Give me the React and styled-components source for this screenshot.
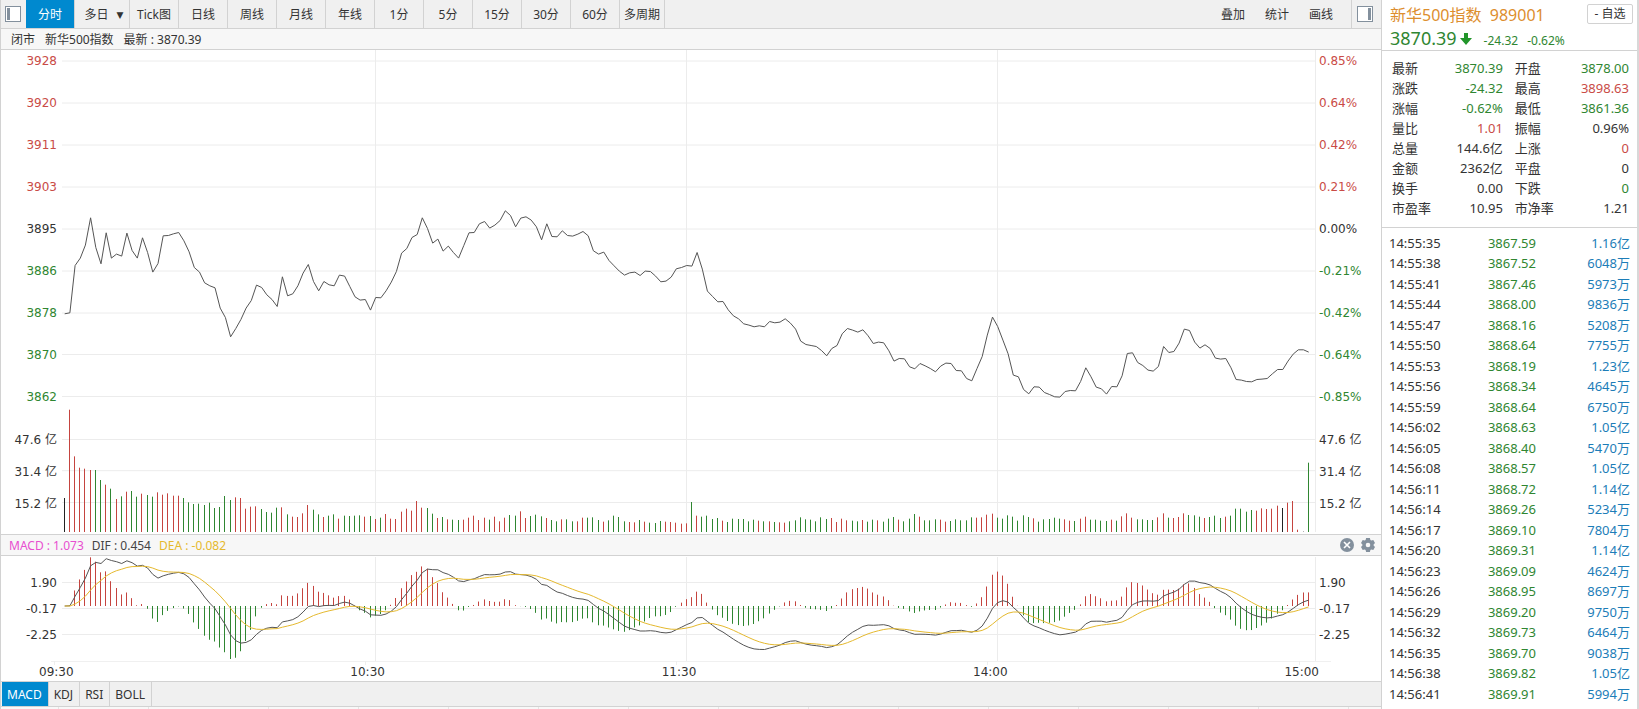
import React, { useState } from 'react';
import styled, { createGlobalStyle } from 'styled-components';

const colors = {
    up: '#c5443f',
    down: '#2f8631',
    text: '#333',
    line: '#d2d2d2',
    bar: '#f0f0f0',
    active: '#0089cf',
    volume: '#1c7db8',
    dea: '#e5b92e',
    icon: '#83909d'
};

const toneColor = { up: '#c94b46', down: colors.down, flat: colors.text };

const PREV_CLOSE = 3894.71;
const MINUTES = 240;

// one packed sample per minute, counted down from PRICE_TOP in 1/PRICE_SCALE points
const PRICE_TOP = 3904.36;
const PRICE_SCALE = 15.19;
const priceSamples = [
    401, 398, 256, 234, 195, 113, 202, 251, 158, 234, 222, 228, 159, 211, 234,
    173, 217, 276, 250, 167, 166, 161, 157, 182, 215, 262, 276, 308, 317, 323,
    384, 412, 470, 445, 418, 384, 361, 315, 322, 344, 358, 379, 290, 347, 341,
    317, 279, 253, 304, 332, 304, 314, 317, 285, 288, 319, 350, 360, 358, 390,
    352, 353, 332, 306, 274, 219, 205, 172, 163, 113, 145, 189, 177, 213, 198,
    217, 234, 196, 158, 157, 131, 124, 144, 135, 121, 92, 106, 140, 114, 110,
    120, 140, 179, 131, 169, 170, 152, 166, 168, 162, 154, 167, 212, 222, 216,
    241, 257, 273, 285, 278, 276, 286, 273, 274, 288, 305, 303, 291, 266, 262,
    256, 258, 217, 267, 333, 349, 365, 364, 389, 407, 416, 431, 435, 440, 437,
    440, 424, 428, 426, 416, 429, 447, 483, 493, 496, 499, 511, 527, 505, 496,
    461, 445, 450, 456, 449, 467, 490, 486, 488, 512, 543, 535, 536, 560, 566,
    550, 557, 565, 575, 558, 549, 550, 571, 572, 595, 602, 565, 529, 465, 411,
    439, 480, 521, 585, 590, 628, 641, 620, 621, 637, 643, 650, 651, 634, 631,
    632, 604, 563, 590, 621, 626, 642, 619, 620, 587, 520, 518, 547, 556, 570,
    573, 559, 499, 517, 514, 489, 447, 451, 486, 504, 494, 505, 534, 537, 535,
    563, 598, 600, 604, 605, 598, 597, 595, 581, 568, 568, 543, 522, 509, 509,
    516
];
const prices = priceSamples.map(v => PRICE_TOP - v / PRICE_SCALE);

const VOLUME_SCALE = 5.83;
const volumeSamples = [
    102, 367, 227, 193, 190, 186, 186, 156, 142, 130, 99, 107, 121, 123, 106,
    115, 111, 106, 119, 112, 116, 109, 109, 102, 89, 84, 85, 81, 88, 72,
    75, 108, 96, 104, 102, 70, 76, 77, 69, 60, 58, 73, 74, 53, 46,
    45, 56, 81, 67, 53, 45, 49, 53, 40, 49, 48, 49, 50, 46, 48,
    39, 43, 54, 40, 39, 61, 70, 64, 93, 73, 72, 55, 42, 45, 38,
    37, 36, 37, 43, 49, 36, 43, 37, 46, 32, 43, 51, 49, 62, 42,
    48, 52, 47, 42, 36, 32, 38, 38, 32, 32, 43, 43, 44, 36, 31,
    35, 49, 45, 32, 30, 29, 36, 31, 28, 27, 33, 31, 30, 28, 25,
    26, 90, 49, 46, 49, 39, 42, 34, 30, 40, 39, 39, 32, 37, 34,
    32, 32, 30, 29, 28, 32, 35, 44, 38, 37, 32, 44, 39, 42, 30,
    40, 35, 34, 32, 36, 31, 37, 35, 31, 40, 45, 37, 32, 40, 54,
    46, 35, 35, 38, 37, 31, 33, 38, 35, 35, 44, 43, 44, 52, 55,
    43, 40, 50, 46, 34, 50, 45, 41, 31, 38, 39, 43, 40, 38, 34,
    33, 40, 46, 37, 37, 34, 33, 37, 34, 47, 56, 43, 38, 38, 36,
    36, 44, 56, 43, 42, 45, 56, 51, 50, 46, 42, 45, 49, 42, 46,
    49, 70, 70, 61, 66, 64, 71, 69, 70, 79, 72, 88, 93, 7, 1,
    208
];
const volumes = volumeSamples.map(v => v / VOLUME_SCALE);

const ema = (values, period) => {
    const k = 2 / (period + 1);
    let last = values[0];
    return values.map(v => {
        last = v * k + last * (1 - k);
        return last;
    });
};

const fast = ema(prices, 12);
const slow = ema(prices, 26);
const dif = fast.map((v, i) => v - slow[i]);
const dea = ema(dif, 9);

const PLOT_WIDTH = 1254;
const MAIN_HEIGHT = 484;
const MACD_HEIGHT = 105;
const MACD_ZERO = 50;

const minuteX = i => 2.2 + (i * 1244) / MINUTES;
const barX = i => Math.floor(minuteX(i)) + 0.5;
const priceY = p => 179 + (PREV_CLOSE - p) * 5.063;
const volumeY = v => 482 - v * 1.943;
const macdY = v => MACD_ZERO - v * 12.6;

const linePoints = (values, toY) =>
    values.map((v, i) => `${(minuteX(i) + 0.5).toFixed(1)},${toY(v).toFixed(1)}`).join(' ');

const barColor = i => {
    if (i === 0 || prices[i] === prices[i - 1]) return '#222';
    return prices[i] > prices[i - 1] ? colors.up : colors.down;
};

const hours = [313.5, 624.5, 935.5, 1253.5];
const mainRows = [11, 53, 95, 137, 179, 221, 263, 304.5, 346.5, 389.5, 420.7, 452.5];
const macdRows = [26.5, 52.5, 78.5];

const priceAxis = [
    ['3928', '0.85%', 'up'],
    ['3920', '0.64%', 'up'],
    ['3911', '0.42%', 'up'],
    ['3903', '0.21%', 'up'],
    ['3895', '0.00%', 'flat'],
    ['3886', '-0.21%', 'down'],
    ['3878', '-0.42%', 'down'],
    ['3870', '-0.64%', 'down'],
    ['3862', '-0.85%', 'down']
];
const volumeAxis = ['47.6 亿', '31.4 亿', '15.2 亿'];
const macdAxis = ['1.90', '-0.17', '-2.25'];
const times = ['09:30', '10:30', '11:30', '14:00', '15:00'];

const periods = ['日线', '周线', '月线', '年线', '1分', '5分', '15分', '30分', '60分'];
const tools = ['叠加', '统计', '画线'];
const indicators = ['MACD', 'KDJ', 'RSI', 'BOLL'];

const quotes = [
    ['最新', '3870.39', 'down', '开盘', '3878.00', 'down'],
    ['涨跌', '-24.32', 'down', '最高', '3898.63', 'up'],
    ['涨幅', '-0.62%', 'down', '最低', '3861.36', 'down'],
    ['量比', '1.01', 'up', '振幅', '0.96%', 'flat'],
    ['总量', '144.6亿', 'flat', '上涨', '0', 'up'],
    ['金额', '2362亿', 'flat', '平盘', '0', 'flat'],
    ['换手', '0.00', 'flat', '下跌', '0', 'down'],
    ['市盈率', '10.95', 'flat', '市净率', '1.21', 'flat']
];

const ticks = [
    ['14:55:35', '3867.59', '1.16亿'],
    ['14:55:38', '3867.52', '6048万'],
    ['14:55:41', '3867.46', '5973万'],
    ['14:55:44', '3868.00', '9836万'],
    ['14:55:47', '3868.16', '5208万'],
    ['14:55:50', '3868.64', '7755万'],
    ['14:55:53', '3868.19', '1.23亿'],
    ['14:55:56', '3868.34', '4645万'],
    ['14:55:59', '3868.64', '6750万'],
    ['14:56:02', '3868.63', '1.05亿'],
    ['14:56:05', '3868.40', '5470万'],
    ['14:56:08', '3868.57', '1.05亿'],
    ['14:56:11', '3868.72', '1.14亿'],
    ['14:56:14', '3869.26', '5234万'],
    ['14:56:17', '3869.10', '7804万'],
    ['14:56:20', '3869.31', '1.14亿'],
    ['14:56:23', '3869.09', '4624万'],
    ['14:56:26', '3868.95', '8697万'],
    ['14:56:29', '3869.20', '9750万'],
    ['14:56:32', '3869.73', '6464万'],
    ['14:56:35', '3869.70', '9038万'],
    ['14:56:38', '3869.82', '1.05亿'],
    ['14:56:41', '3869.91', '5994万'],
    ['14:56:44', '3869.85', '6880万']
];

const PanelIcon = ({ side }) => (
    <svg width="16" height="16" viewBox="0 0 16 16">
        <rect x="0.5" y="0.5" width="15" height="15" fill="#fff" stroke={colors.icon} />
        <rect x={side === 'left' ? 2 : 11} y="2" width="3" height="12" fill={colors.icon} />
    </svg>
);

const CloseIcon = () => (
    <svg width="14" height="14" viewBox="0 0 14 14">
        <circle cx="7" cy="7" r="7" fill={colors.icon} />
        <path d="M4 4l6 6M10 4l-6 6" stroke="#fff" strokeWidth="1.6" />
    </svg>
);

const GearIcon = () => (
    <svg width="14" height="14" viewBox="0 0 14 14">
        <path
            fill={colors.icon}
            fillRule="evenodd"
            d="M5.1 0h3.8l.5 2 .9.5 2-.6L14 4.9l-1.4 1.5v1.2L14 9.1l-1.7 3-2-.6-.9.5-.5 2H5.1l-.5-2-.9-.5-2 .6L0 9.1l1.4-1.5V6.4L0 4.9l1.7-3 2 .6.9-.5zM7 4.7a2.3 2.3 0 1 0 0 4.6 2.3 2.3 0 0 0 0-4.6z"
        />
    </svg>
);

const DownArrow = () => (
    <svg width="12" height="12" viewBox="0 0 12 12">
        <path d="M4 0h4v5h4l-6 7-6-7h4z" fill="#22952a" />
    </svg>
);

const Grid = ({ rows, bottom, top }) => (
    <g stroke="#ececec">
        {rows.map(y => (
            <line key={y} x1="0" x2={PLOT_WIDTH} y1={y} y2={y} />
        ))}
        {hours.map(x => (
            <line key={x} x1={x} x2={x} y1={top} y2={bottom} />
        ))}
    </g>
);

const MainPlot = () => (
    <Plot viewBox={`0 0 ${PLOT_WIDTH} ${MAIN_HEIGHT}`} height={MAIN_HEIGHT} preserveAspectRatio="none">
        <Grid rows={mainRows} top={0} bottom={482} />
        {volumes.map((v, i) => (
            <line key={i} x1={barX(i)} x2={barX(i)} y1={volumeY(v)} y2={482} stroke={barColor(i)} />
        ))}
        <polyline points={linePoints(prices, priceY)} stroke="#555" />
    </Plot>
);

const MacdPlot = () => (
    <Plot viewBox={`0 0 ${PLOT_WIDTH} ${MACD_HEIGHT}`} height={MACD_HEIGHT} preserveAspectRatio="none">
        <Grid rows={macdRows} top={1} bottom={MACD_HEIGHT} />
        {dif.map((v, i) => {
            const value = 2 * (v - dea[i]);
            return (
                <line
                    key={i}
                    x1={barX(i)}
                    x2={barX(i)}
                    y1={MACD_ZERO}
                    y2={macdY(value)}
                    stroke={value > 0 ? colors.up : colors.down}
                />
            );
        })}
        <polyline points={linePoints(dif, macdY)} stroke="#555" />
        <polyline points={linePoints(dea, macdY)} stroke={colors.dea} />
    </Plot>
);

const TimeAxis = () => (
    <TimeAxisWrapper>
        <AxisRule viewBox="0 0 1280 5" preserveAspectRatio="none">
            <path d="M0 .5H1280M3.5 0v5M314.5 0v5M625.5 0v5M936.5 0v5M1248.5 0v5" />
        </AxisRule>
        <Times>
            {times.map(t => (
                <span key={t}>{t}</span>
            ))}
        </Times>
    </TimeAxisWrapper>
);

export default function App() {
    const [period, setPeriod] = useState('分时');
    const [indicator, setIndicator] = useState('MACD');

    return (
        <Page>
            <GlobalStyle />
            <ChartArea>
                <Toolbar>
                    <IconButton aria-label="左侧栏">
                        <PanelIcon side="left" />
                    </IconButton>
                    <PeriodButton $active={period === '分时'} onClick={() => setPeriod('分时')}>
                        分时
                    </PeriodButton>
                    <PeriodButton $width={55} $active={period === '多日'} onClick={() => setPeriod('多日')}>
                        多日<Caret>▼</Caret>
                    </PeriodButton>
                    <PeriodButton $active={period === 'Tick图'} onClick={() => setPeriod('Tick图')}>
                        Tick图
                    </PeriodButton>
                    {periods.map(p => (
                        <PeriodButton key={p} $active={period === p} onClick={() => setPeriod(p)}>
                            {p}
                        </PeriodButton>
                    ))}
                    <PeriodButton $width={45} $active={period === '多周期'} onClick={() => setPeriod('多周期')}>
                        多周期
                    </PeriodButton>
                    <Tools>
                        {tools.map(t => (
                            <ToolButton key={t}>{t}</ToolButton>
                        ))}
                    </Tools>
                    <IconButton $right aria-label="右侧栏">
                        <PanelIcon side="right" />
                    </IconButton>
                </Toolbar>

                <InfoBar>
                    <span>闭市</span>
                    <span>新华500指数</span>
                    <span>最新 : 3870.39</span>
                </InfoBar>

                <ChartRow>
                    <Axis $side="left">
                        <PriceLabels>
                            {priceAxis.map(([price, , tone]) => (
                                <AxisLabel key={price} $tone={tone}>{price}</AxisLabel>
                            ))}
                        </PriceLabels>
                        <VolumeLabels>
                            {volumeAxis.map(v => (
                                <AxisLabel key={v}>{v}</AxisLabel>
                            ))}
                        </VolumeLabels>
                    </Axis>
                    <MainPlot />
                    <Axis>
                        <PriceLabels>
                            {priceAxis.map(([, percent, tone]) => (
                                <AxisLabel key={percent} $tone={tone}>{percent}</AxisLabel>
                            ))}
                        </PriceLabels>
                        <VolumeLabels>
                            {volumeAxis.map(v => (
                                <AxisLabel key={v}>{v}</AxisLabel>
                            ))}
                        </VolumeLabels>
                    </Axis>
                </ChartRow>

                <MacdBar>
                    <Legend $color="#e84fd0">MACD : 1.073</Legend>
                    <Legend $color="#444">DIF : 0.454</Legend>
                    <Legend $color={colors.dea}>DEA : -0.082</Legend>
                    <MacdActions>
                        <PlainButton aria-label="关闭">
                            <CloseIcon />
                        </PlainButton>
                        <PlainButton aria-label="设置">
                            <GearIcon />
                        </PlainButton>
                    </MacdActions>
                </MacdBar>

                <ChartRow>
                    <Axis $side="left">
                        <MacdLabels>
                            {macdAxis.map(v => (
                                <AxisLabel key={v}>{v}</AxisLabel>
                            ))}
                        </MacdLabels>
                    </Axis>
                    <MacdPlot />
                    <Axis>
                        <MacdLabels>
                            {macdAxis.map(v => (
                                <AxisLabel key={v}>{v}</AxisLabel>
                            ))}
                        </MacdLabels>
                    </Axis>
                </ChartRow>
                <TimeAxis />

                <Tabs>
                    {indicators.map(name => (
                        <Tab key={name} $active={indicator === name} onClick={() => setIndicator(name)}>
                            {name}
                        </Tab>
                    ))}
                </Tabs>
                <Sheet>
                    <SheetCell $width={58} />
                    <SheetCell $width={90} />
                    <SheetCell $width={120} />
                    {Array.from({ length: 12 }, (_, i) => (
                        <SheetCell key={i} $width={90} />
                    ))}
                </Sheet>
            </ChartArea>

            <SidePanel>
                <SideHeader>
                    <TitleRow>
                        <Title>新华500指数&nbsp; 989001</Title>
                        <WatchButton>- 自选</WatchButton>
                    </TitleRow>
                    <PriceRow>
                        <BigPrice>3870.39</BigPrice>
                        <DownArrow />
                        <Change>-24.32</Change>
                        <Change>-0.62%</Change>
                    </PriceRow>
                </SideHeader>
                <Quotes>
                    <tbody>
                        {quotes.map(([a, av, at, b, bv, bt]) => (
                            <tr key={a}>
                                <QuoteName scope="row">{a}</QuoteName>
                                <QuoteValue $tone={at}>{av}</QuoteValue>
                                <QuoteName scope="row" $second>{b}</QuoteName>
                                <QuoteValue $tone={bt}>{bv}</QuoteValue>
                            </tr>
                        ))}
                    </tbody>
                </Quotes>
                <TickArea>
                    <Ticks>
                        <tbody>
                            {ticks.map(([time, price, volume]) => (
                                <tr key={time}>
                                    <td>{time}</td>
                                    <TickPrice>{price}</TickPrice>
                                    <TickVolume>{volume}</TickVolume>
                                </tr>
                            ))}
                        </tbody>
                    </Ticks>
                </TickArea>
            </SidePanel>
        </Page>
    );
}

const GlobalStyle = createGlobalStyle`
    * {
        box-sizing: border-box;
    }
    body {
        margin: 0;
        background: #fff;
        color: ${colors.text};
        font: 12px/20px 'Noto Sans', 'Noto Sans CJK SC', sans-serif;
    }
    button {
        border: none;
        padding: 0;
        background: none;
        color: inherit;
        font: inherit;
        white-space: nowrap;
        cursor: pointer;
    }
    svg {
        display: block;
        flex: none;
    }
`;

const Page = styled.div`
    display: grid;
    grid-template-columns: minmax(0, 1fr) 258px;
    height: 100vh;
    overflow: hidden;
`;

const ChartArea = styled.main`
    display: flex;
    flex-direction: column;
    min-width: 0;
    border-left: 1px solid ${colors.line};
`;

const Toolbar = styled.div`
    display: flex;
    height: 29px;
    flex: none;
    background: ${colors.bar};
    border-bottom: 1px solid ${colors.line};
`;

const IconButton = styled.button`
    display: flex;
    align-items: center;
    justify-content: center;
    width: ${props => (props.$right ? 30 : 25)}px;
    border-left: ${props => (props.$right ? `1px solid ${colors.line}` : 'none')};
    padding-right: ${props => (props.$right ? 4 : 1)}px;
`;

const PeriodButton = styled.button`
    width: ${props => props.$width || 49}px;
    padding-top: 2px;
    border-right: 1px solid ${colors.line};
    background: ${props => (props.$active ? colors.active : 'none')};
    color: ${props => (props.$active ? '#fff' : colors.text)};
`;

const Caret = styled.span`
    margin: 0 -4px 0 8px;
    font-size: 9px;
    font-family: 'DejaVu Sans', sans-serif;
    vertical-align: 1px;
`;

const Tools = styled.div`
    display: flex;
    margin-left: auto;
    padding-right: 8px;
`;

const ToolButton = styled.button`
    width: 44px;
    padding-top: 2px;
`;

const InfoBar = styled.div`
    display: flex;
    gap: 10px;
    flex: none;
    height: 21px;
    padding-left: 10px;
    line-height: 22px;
    background: #f7f7f7;
    border-bottom: 1px solid ${colors.line};
`;

const ChartRow = styled.section`
    display: flex;
    flex: none;
`;

const Plot = styled.svg`
    flex: 1;
    min-width: 0;
    fill: none;

    * {
        vector-effect: non-scaling-stroke;
    }
`;

const Axis = styled.div`
    flex: none;
    width: ${props => (props.$side === 'left' ? 61 : 65)}px;
    padding: ${props => (props.$side === 'left' ? '0 5px 0 0' : '0 0 0 3px')};
    text-align: ${props => (props.$side === 'left' ? 'right' : 'left')};
    font: 12px/16px 'DejaVu Sans', 'Noto Sans CJK SC', sans-serif;
`;

const LabelGroup = styled.div`
    display: flex;
    flex-direction: column;
    justify-content: space-between;
`;

const PriceLabels = styled(LabelGroup)`
    height: 352px;
    margin-top: 3px;
`;

const VolumeLabels = styled(LabelGroup)`
    height: 80px;
    margin-top: 27px;
`;

const MacdLabels = styled(LabelGroup)`
    height: 68px;
    margin-top: 19px;
`;

const AxisLabel = styled.span`
    color: ${props => toneColor[props.$tone || 'flat']};
    white-space: nowrap;
`;

const MacdBar = styled.div`
    display: flex;
    align-items: center;
    gap: 8px;
    flex: none;
    height: 22px;
    padding: 0 6px 0 8px;
    background: #f7f7f7;
    border-top: 1px solid ${colors.line};
    border-bottom: 1px solid ${colors.line};
`;

const Legend = styled.span`
    padding-top: 2px;
    color: ${props => props.$color};
`;

const MacdActions = styled.div`
    display: flex;
    gap: 7px;
    margin-left: auto;
`;

const PlainButton = styled.button`
    display: block;
`;

const TimeAxisWrapper = styled.div`
    flex: none;
    height: 21px;
    border-bottom: 1px solid ${colors.line};
`;

const AxisRule = styled.svg`
    width: calc(100% - 100px);
    height: 4px;
    margin-left: 50px;
    fill: none;
    stroke: #ececec;
`;

const Times = styled.div`
    display: flex;
    justify-content: space-between;
    padding: 0 62px 0 38px;
    font: 12px/14px 'DejaVu Sans', sans-serif;
`;

const Tabs = styled.div`
    display: flex;
    flex: none;
    height: 25px;
    padding-left: 1px;
    background: ${colors.bar};
    border-bottom: 1px solid ${colors.line};
`;

const Tab = styled.button`
    padding: 2px 6px 0 5px;
    border-right: 1px solid ${colors.line};
    background: ${props => (props.$active ? colors.active : 'none')};
    color: ${props => (props.$active ? '#fff' : colors.text)};
`;

const Sheet = styled.div`
    display: flex;
    flex: 1;
    overflow: hidden;
    background: #f8f8f8;
`;

const SheetCell = styled.div`
    flex: none;
    width: ${props => props.$width}px;
    border-right: 1px solid #e4e4e4;
`;

const SidePanel = styled.aside`
    display: flex;
    flex-direction: column;
    min-height: 0;
    border-left: 1px solid ${colors.line};
    border-right: 2px solid #d8d8d8;
`;

const SideHeader = styled.header`
    flex: none;
    height: 51px;
    padding: 4px 4px 0 8px;
    border-bottom: 1px solid ${colors.line};
`;

const TitleRow = styled.div`
    display: flex;
    justify-content: space-between;
`;

const Title = styled.h1`
    margin: 0;
    color: #dd8e2e;
    font-size: 16px;
    font-weight: 400;
    line-height: 22px;
`;

const WatchButton = styled.button`
    width: 46px;
    height: 20px;
    border: 1px solid ${colors.line};
    border-radius: 2px;
    line-height: 18px;
`;

const PriceRow = styled.div`
    display: flex;
    align-items: center;
    color: ${colors.down};
`;

const BigPrice = styled.strong`
    margin-right: 3px;
    font-size: 18px;
    font-weight: 400;
    line-height: 23px;
`;

const Change = styled.span`
    margin-left: 9px;
    padding-top: 5px;

    svg + & {
        margin-left: 12px;
    }
`;

const Quotes = styled.table`
    flex: none;
    width: 100%;
    height: 177px;
    padding: 7px 8px 9px 10px;
    border-bottom: 1px solid ${colors.line};
    border-spacing: 0;
    font-size: 13px;
    line-height: 20px;

    th,
    td {
        height: 20px;
        padding: 0;
    }
`;

const QuoteName = styled.th`
    && {
        padding-left: ${props => (props.$second ? 12 : 0)}px;
    }
    text-align: left;
    font-weight: 400;
`;

const QuoteValue = styled.td`
    color: ${props => toneColor[props.$tone]};
    text-align: right;
`;

const TickArea = styled.div`
    flex: 1;
    min-height: 0;
    overflow: hidden;
    padding: 4px 7px 0;
`;

const Ticks = styled.table`
    width: 100%;
    border-spacing: 0;
    font-size: 13px;
    line-height: 20px;

    td {
        height: 20px;
        padding: 0;
    }
    tr:nth-child(odd) td {
        height: 21px;
    }
`;

const TickPrice = styled.td`
    color: ${colors.down};
    text-align: right;
`;

const TickVolume = styled.td`
    width: 94px;
    color: ${colors.volume};
    text-align: right;
`;
